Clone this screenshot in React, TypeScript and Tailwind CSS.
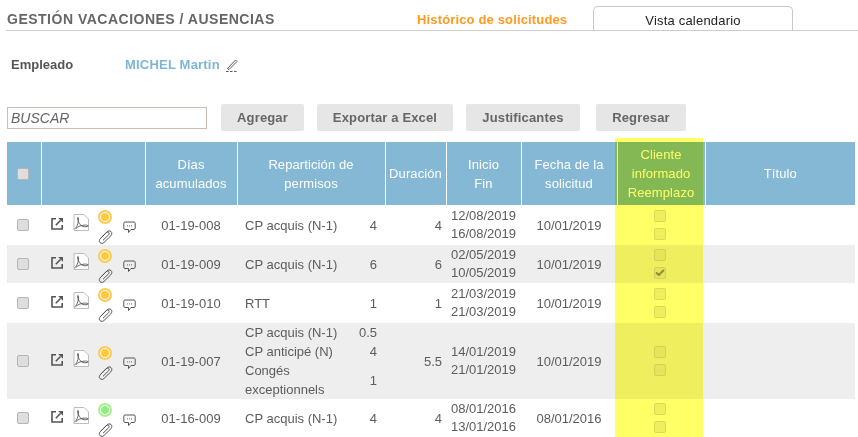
import { Fragment } from 'react'
import { Check } from 'lucide-react'

interface Permiso {
  nombre: string[];
  valor: string;
}

interface Solicitud {
  id: string;
  permisos: Permiso[];
  duracion: string;
  inicio: string;
  fin: string;
  fecha: string;
  estado: 'orange' | 'green';
  reemplazo?: boolean;
  rowClass: string;
}

const solicitudes: Solicitud[] = [
  { id: '01-19-008', permisos: [{ nombre: ['CP acquis (N-1)'], valor: '4' }], duracion: '4', inicio: '12/08/2019', fin: '16/08/2019', fecha: '10/01/2019', estado: 'orange', rowClass: 'h-[40px] bg-white' },
  { id: '01-19-009', permisos: [{ nombre: ['CP acquis (N-1)'], valor: '6' }], duracion: '6', inicio: '02/05/2019', fin: '10/05/2019', fecha: '10/01/2019', estado: 'orange', reemplazo: true, rowClass: 'h-[38px] bg-[#eeeeee]' },
  { id: '01-19-010', permisos: [{ nombre: ['RTT'], valor: '1' }], duracion: '1', inicio: '21/03/2019', fin: '21/03/2019', fecha: '10/01/2019', estado: 'orange', rowClass: 'h-[40px] bg-white' },
  {
    id: '01-19-007',
    permisos: [
      { nombre: ['CP acquis (N-1)'], valor: '0.5' },
      { nombre: ['CP anticipé (N)'], valor: '4' },
      { nombre: ['Congés', 'exceptionnels'], valor: '1' },
    ],
    duracion: '5.5',
    inicio: '14/01/2019',
    fin: '21/01/2019',
    fecha: '10/01/2019',
    estado: 'orange',
    rowClass: 'h-[76px] bg-[#eeeeee]',
  },
  { id: '01-16-009', permisos: [{ nombre: ['CP acquis (N-1)'], valor: '4' }], duracion: '4', inicio: '08/01/2016', fin: '13/01/2016', fecha: '08/01/2016', estado: 'green', rowClass: 'h-[38px] bg-white' },
]

const botones = [
  { label: 'Agregar', className: 'w-[83px]' },
  { label: 'Exportar a Excel', className: 'w-[136px]' },
  { label: 'Justificantes', className: 'w-[114px]' },
  { label: 'Regresar', className: 'w-[90px] ml-[3px]' },
]

function Casilla({ checked = false, disabled = false }: { checked?: boolean; disabled?: boolean }) {
  return (
    <label className={`relative block w-[12px] h-[12px] ${disabled ? 'opacity-50' : ''}`}>
      <input
        type="checkbox"
        readOnly
        checked={checked}
        className="block appearance-none w-[12px] h-[12px] rounded-[2px] border bg-[#dedede] border-[#b5b5b5]"
      />
      {checked && <Check size={10} strokeWidth={5} className="absolute left-[1px] top-[1px] text-[#333]" />}
    </label>
  )
}

function IconoAbrir() {
  return (
    <svg width="13" height="13" viewBox="0 0 13 13" fill="none" stroke="#555" strokeWidth="1.6">
      <path d="M5 1.800H1v10.200h10.200V8" />
      <path d="M4.800 8.200 9.500 3.500" />
      <path d="M7.200 1h4.800v4.800z" fill="#555" stroke="none" />
    </svg>
  )
}

function IconoPdf() {
  return (
    <svg width="17" height="17" viewBox="0 0 17 17" fill="none">
      <path d="M1 .5h10l4.500 4.500v11.500H1z" stroke="#b5b5b5" fill="#fff" strokeWidth="0.9" />
      <path
        d="M1.500 15c2-1 4.100-6 4.100-10 0-2.300-1.300-1.800-1.100-.4.500 3.800 3 7 5 7.800 1.800.7 5.500.2 5.800-.4-.2-.8-2.500-1-4-.9-3.300.2-6 1.200-8.500 3.400"
        stroke="#555"
        strokeWidth="0.9"
      />
    </svg>
  )
}

function IconoClip() {
  return (
    <svg width="15" height="15" viewBox="0 0 15 15" fill="none" stroke="#555">
      <path d="M3 8.800 8.800 3c1.200-1.200 3.200-1.500 4.300-.4 1.100 1.100.9 3-.3 4.200L6 13.500c-1 1-2.800 1.200-3.900.2-1.100-1.100-1-2.800 0-3.800l6.200-6.200c.7-.7 1.800-.8 2.400-.2.600.6.500 1.700-.2 2.400L5 11.300" />
    </svg>
  )
}

function IconoComentario() {
  return (
    <svg width="13" height="13" viewBox="0 0 13 13" fill="none">
      <path d="M2 1h9c.6 0 1.200.5 1.200 1.200v5c0 .7-.6 1.300-1.200 1.300H8L5.500 11.500V8.500H2c-.7 0-1.200-.6-1.200-1.300v-5C.8 1.500 1.300 1 2 1z" stroke="#555" />
      <path d="M4 4.900h1M6 4.900h1M8 4.900h1" stroke="#666" />
    </svg>
  )
}

function Estado({ estado }: { estado: 'orange' | 'green' }) {
  return (
    <span
      className={`flex items-center justify-center w-[14px] h-[14px] rounded-full ${
        estado === 'orange' ? 'bg-[#ffcb52]' : 'bg-[#a6f08f]'
      }`}
    >
      <span
        className={`w-[10px] h-[10px] rounded-full border-[1.5px] border-white bg-clip-padding ${
          estado === 'orange' ? 'bg-[#ffc93f]' : 'bg-[#93ea80]'
        }`}
      />
    </span>
  )
}

export default function App() {
  return (
    <div className="w-[858px] h-[437px] overflow-hidden bg-white text-[13px] text-[#5c5c5c] font-['Liberation_Sans',Arial,sans-serif]">
      <div className="ml-[6px] h-[31px] flex items-end border-b border-[#cccccc]">
        <h1 className="w-[411px] pl-[1px] text-[14px] font-bold text-[#666] tracking-[0.5px]">
          GESTIÓN VACACIONES / AUSENCIAS
        </h1>
        <a className="w-[176px] text-[13px] leading-[21px] font-bold text-[#ff9a22] tracking-[0.15px]">Histórico de solicitudes</a>
        <a className="w-[200px] h-[24px] flex items-center justify-center border border-b-0 border-[#c8c8c8] rounded-t-[5px] text-[#222] tracking-[0.2px] pt-[4px]">
          Vista calendario
        </a>
      </div>

      <div className="flex items-center ml-[11px] mt-[25px] h-[18px]">
        <span className="w-[114px] font-bold text-[#555]">Empleado</span>
        <span className="font-bold text-[#7db6d6] tracking-[0.2px]">MICHEL Martin</span>
        <svg width="14" height="15" viewBox="0 0 14 15" fill="none" className="ml-[5px]" stroke="#444" strokeWidth="0.9">
          <path d="M2.500 10.500 10.500 2M4 11.500 12 3.500M10.500 2 12 3.500M2.500 10.500 4 11.500" />
          <path d="M1 13.500h2.500M5 13.500h2.500M9 13.500h2.500" />
        </svg>
      </div>

      <div className="flex items-center ml-[7px] mt-[30px] gap-[13px]">
        <input
          placeholder="BUSCAR"
          className="w-[200px] h-[22px] mr-[1px] px-[3px] border border-[#c8c0b8] italic text-[14px] placeholder:text-[#666] outline-none"
        />
        {botones.map((boton) => (
          <button key={boton.label} className={`h-[27px] rounded-[2px] bg-[#e6e6e6] font-bold text-[#666] tracking-[0.15px] ${boton.className}`}>
            {boton.label}
          </button>
        ))}
      </div>

      <div className="relative ml-[7px] mt-[11px] w-[848px]">
        <table className="w-[848px] table-fixed border-collapse">
          <colgroup>
            <col className="w-[34px]" />
            <col className="w-[104px]" />
            <col className="w-[92px]" />
            <col className="w-[148px]" />
            <col className="w-[61px]" />
            <col className="w-[75px]" />
            <col className="w-[96px]" />
            <col className="w-[88px]" />
            <col className="w-[150px]" />
          </colgroup>
          <thead>
            <tr className="h-[63px] bg-[#84b8d4] text-white leading-[19px] tracking-[0.1px] [&>th]:border-l [&>th]:border-white [&>th]:font-normal">
              <th className="!border-l-0">
                <span className="flex justify-center pr-[2px]">
                  <Casilla />
                </span>
              </th>
              <th></th>
              <th>Días<br />acumulados</th>
              <th>Repartición de<br />permisos</th>
              <th>Duración</th>
              <th>Inicio<br />Fin</th>
              <th>Fecha de la<br />solicitud</th>
              <th>Cliente<br />informado<br />Reemplazo</th>
              <th>Título</th>
            </tr>
          </thead>
          <tbody>
            {solicitudes.map((s) => (
              <tr key={s.id} className={`leading-[19px] ${s.rowClass}`}>
                <td>
                  <span className="flex justify-center pr-[2px]">
                    <Casilla />
                  </span>
                </td>
                <td className="pt-[4px]">
                  <div className="flex items-start pl-[10px]">
                    <span className="mt-[7px]"><IconoAbrir /></span>
                    <span className="ml-[9px] mt-[4px]"><IconoPdf /></span>
                    <span className="ml-[8px] flex flex-col gap-[5px]">
                      <Estado estado={s.estado} />
                      <IconoClip />
                    </span>
                    <span className="ml-[10px] mt-[11px]"><IconoComentario /></span>
                  </div>
                </td>
                <td className="text-center">{s.id}</td>
                <td className="pl-[8px] pr-[8px]">
                  {s.permisos.map((p) => (
                    <div key={p.nombre[0]} className="flex items-center justify-between">
                      <span>
                        {p.nombre.map((linea) => (
                          <Fragment key={linea}>
                            {linea}
                            <br />
                          </Fragment>
                        ))}
                      </span>
                      <span>{p.valor}</span>
                    </div>
                  ))}
                </td>
                <td className="text-right pr-[4px]">{s.duracion}</td>
                <td className="text-center leading-[18.500px]">
                  {s.inicio}
                  <br />
                  {s.fin}
                </td>
                <td className="text-center">{s.fecha}</td>
                <td>
                  <div className="flex flex-col items-center gap-[6px] pr-[2px]">
                    <Casilla disabled />
                    <Casilla disabled checked={s.reemplazo} />
                  </div>
                </td>
                <td></td>
              </tr>
            ))}
          </tbody>
        </table>
        {/* resaltado amarillo sobre la columna */}
        <div className="absolute left-[608px] -top-[4px] w-[88px] h-[299px] bg-[#ffff66] mix-blend-multiply pointer-events-none" />
      </div>
    </div>
  )
}
